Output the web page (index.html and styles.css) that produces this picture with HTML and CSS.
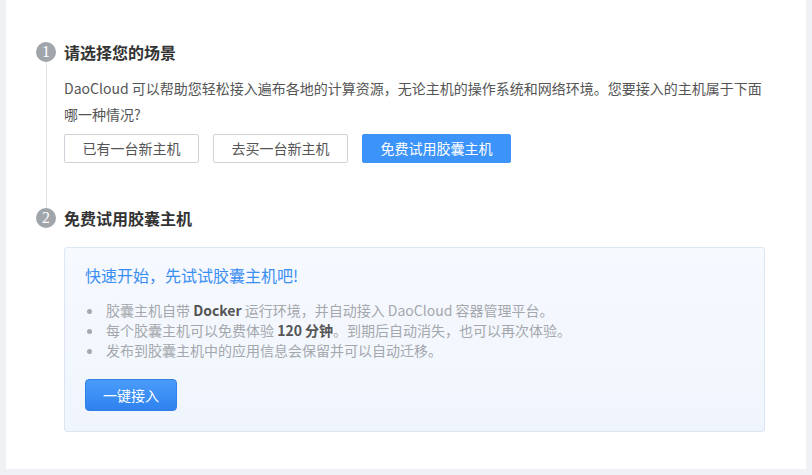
FILE: index.html
```html
<!DOCTYPE html>
<html lang="zh-CN">
<head>
<meta charset="utf-8">
<link rel="stylesheet" href="styles.css">
</head>
<body>
<div class="card">
  <div class="step">
    <div class="rail"><span class="num">1</span><span class="line"></span></div>
    <div class="body">
      <h2 class="title">请选择您的场景</h2>
      <p class="desc">DaoCloud 可以帮助您轻松接入遍布各地的计算资源，无论主机的操作系统和网络环境。您要接入的主机属于下面哪一种情况?</p>
      <div class="choices">
        <button class="btn">已有一台新主机</button>
        <button class="btn">去买一台新主机</button>
        <button class="btn btn-active">免费试用胶囊主机</button>
      </div>
    </div>
  </div>
  <div class="step">
    <div class="rail"><span class="num">2</span></div>
    <div class="body">
      <h2 class="title">免费试用胶囊主机</h2>
      <div class="panel">
        <h3 class="panel-title">快速开始，先试试胶囊主机吧!</h3>
        <ul class="tips">
          <li>胶囊主机自带 <b>Docker</b> 运行环境，并自动接入 DaoCloud 容器管理平台。</li>
          <li>每个胶囊主机可以免费体验 <b>120 分钟</b>。到期后自动消失，也可以再次体验。</li>
          <li>发布到胶囊主机中的应用信息会保留并可以自动迁移。</li>
        </ul>
        <button class="btn-primary">一键接入</button>
      </div>
    </div>
  </div>
</div>
</body>
</html>
```
FILE: styles.css
```css
* { box-sizing: border-box; }
html, body { margin: 0; padding: 0; }
body {
  background: #eff1f5;
  font-family: "Noto Sans CJK SC", "Noto Sans", sans-serif;
  color: #555;
  font-size: 14px;
}
.card {
  margin: 0 6px;
  height: 469px;
  background: #fff;
  padding: 42px 41px 0 30px;
}
.step {
  display: grid;
  grid-template-columns: 20px 1fr;
  column-gap: 8px;
}
.rail {
  display: flex;
  flex-direction: column;
  align-items: center;
}
.num {
  width: 20px;
  height: 20px;
  border-radius: 50%;
  background: #a0a4ab;
  color: #fff;
  font-family: "Liberation Serif", serif;
  font-size: 16px;
  line-height: 20px;
  text-align: center;
  flex: none;
}
.line {
  flex: 1;
  width: 1px;
  background: #dfe2e7;
}
.title {
  margin: 0;
  font-size: 16px;
  line-height: 20px;
  font-weight: 700;
  color: #333;
}
.desc {
  margin: 13px 0 0;
  line-height: 26px;
  color: #555;
}
.choices {
  display: flex;
  gap: 14px;
  margin-top: 7px;
  padding-bottom: 45px;
}
.btn {
  font-family: inherit;
  font-size: 14px;
  height: 29px;
  padding: 0;
  white-space: nowrap;
  border: 1px solid #cfd3d9;
  border-radius: 2px;
  background: #fff;
  color: #555;
  line-height: 27px;
  width: 135px;
}
.btn-active {
  width: 149px;
  background: #3c93fa;
  border-color: #3c93fa;
  color: #fff;
}
.panel {
  margin-top: 19px;
  border: 1px solid #dce6f2;
  border-radius: 3px;
  background: linear-gradient(#f6f9fe, #f0f5fd);
  padding: 15px 20px 20px;
  height: 185px;
}
.panel-title {
  margin: 0;
  font-size: 16px;
  font-weight: 400;
  line-height: 24px;
  color: #3a8ef2;
}
.tips {
  list-style: none;
  margin: 13px 0 0;
  padding: 0;
}
.tips li {
  line-height: 20px;
  color: #a4a7ac;
}
.tips li::before {
  content: "";
  display: inline-block;
  vertical-align: middle;
  width: 5px;
  height: 5px;
  border-radius: 50%;
  background: #a6a9ae;
  margin: -2px 14px 0 2px;
}
.tips b {
  color: #555;
  font-weight: 700;
}
.btn-primary {
  margin-top: 19px;
  font-family: inherit;
  font-size: 14px;
  height: 32px;
  width: 92px;
  padding: 0;
  border: 1px solid #2f7fe6;
  border-radius: 4px;
  background: linear-gradient(#4a9cfa, #2f82ee);
  color: #fff;
}
```
